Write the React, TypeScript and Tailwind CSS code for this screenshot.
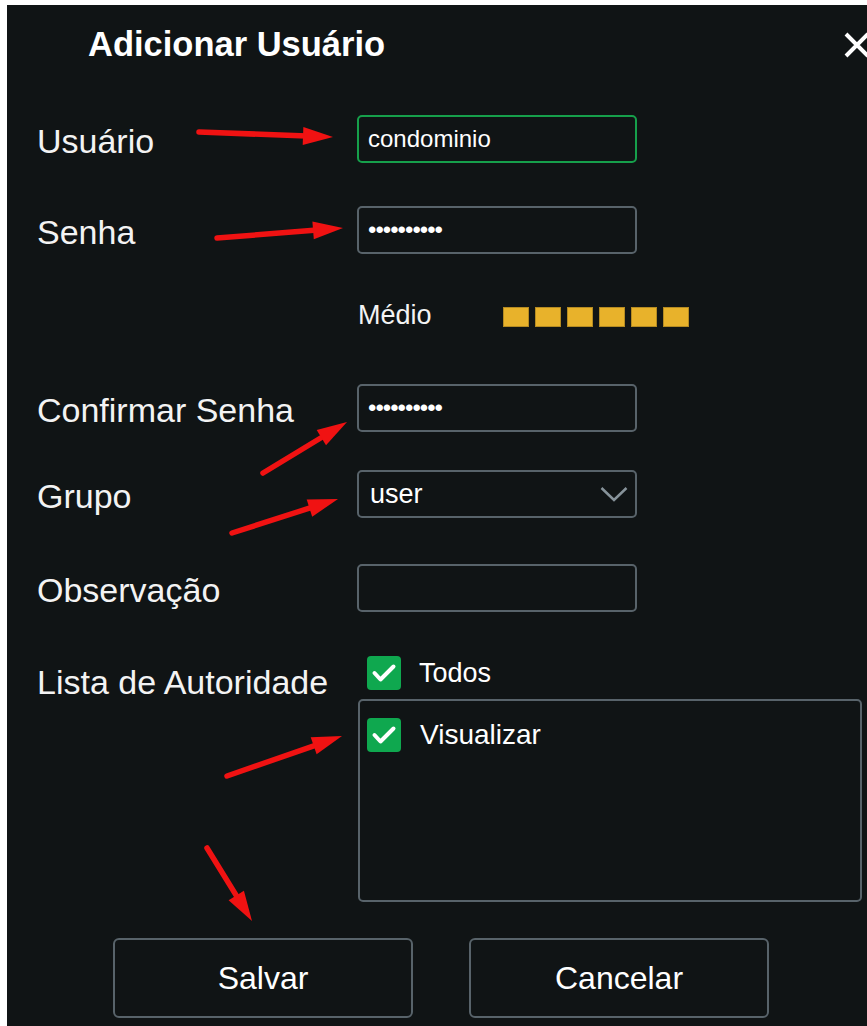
const arrows: { from: [number, number]; to: [number, number] }[] = [
  { from: [199, 132], to: [333, 137] },
  { from: [217, 238], to: [343, 228] },
  { from: [263, 473], to: [347, 422] },
  { from: [232, 533], to: [338, 499] },
  { from: [227, 776], to: [342, 736] },
  { from: [207, 848], to: [252, 921] },
];

// red callout arrows drawn over the form
const Arrow = ({ from, to }: { from: [number, number]; to: [number, number] }) => {
  const [x1, y1] = from;
  const [x2, y2] = to;
  const len = Math.hypot(x2 - x1, y2 - y1);
  const ux = (x2 - x1) / len;
  const uy = (y2 - y1) / len;
  const head = 30;
  const half = 9;
  const bx = x2 - ux * head;
  const by = y2 - uy * head;
  const nx = -uy * half;
  const ny = ux * half;
  return (
    <g>
      <line
        x1={x1}
        y1={y1}
        x2={bx + ux * 4}
        y2={by + uy * 4}
        stroke="#f01212"
        strokeWidth={5.5}
        strokeLinecap="round"
      />
      <polygon
        points={`${x2},${y2} ${bx + nx},${by + ny} ${bx - nx},${by - ny}`}
        fill="#f01212"
      />
    </g>
  );
};

const CheckBox = () => (
  <span className="flex h-[34px] w-[34px] shrink-0 items-center justify-center rounded-[4px] bg-[#0fa84f]">
    <svg width="34" height="34" viewBox="0 0 34 34">
      <polyline
        points="7.5,17 13.5,23.5 26.5,10.5"
        fill="none"
        stroke="white"
        strokeWidth={4}
        strokeLinecap="round"
        strokeLinejoin="round"
      />
    </svg>
  </span>
);

const Row = ({ label, children }: { label?: string; children: React.ReactNode }) => (
  <div className="flex h-[48px] items-center">
    <span className="w-[320px] shrink-0 translate-y-[2px] text-[34px] leading-[38px] text-[#f3f3f3]">
      {label}
    </span>
    {children}
  </div>
);

const inputCls =
  "h-[48px] w-[280px] rounded-[5px] border-2 bg-transparent px-[9px] text-[24px] leading-[30px] text-white outline-none";

const App: React.FC = () => {
  return (
    <div className="relative h-[1026px] w-[867px] overflow-hidden bg-white font-['Liberation_Sans',Arial,sans-serif]">
      <div className="ml-[7px] mt-[5px] h-[1021px] w-[860px] overflow-hidden bg-[#101415] pl-[30px]">
        <header className="flex h-[80px] items-center">
          <h1 className="pl-[51px] text-[34.5px] font-bold text-white">Adicionar Usuário</h1>
          <svg className="-mr-[4px] ml-auto" width="28" height="28" viewBox="0 0 28 28">
            <path d="M3 3 L25 25 M25 3 L3 25" stroke="white" strokeWidth={4} />
          </svg>
        </header>

        <div className="mt-[30px]">
          <Row label="Usuário">
            <input readOnly defaultValue="condominio" className={`${inputCls} border-[#16a04b]`} />
          </Row>
        </div>

        <div className="mt-[43px]">
          <Row label="Senha">
            <input
              readOnly
              defaultValue="••••••••••"
              className={`${inputCls} border-[#58636a] text-[19px] tracking-[-1px]`}
            />
          </Row>
        </div>

        <div className="mt-[44px] flex h-[34px] items-center pl-[320px]">
          <span className="w-[146px] pl-[1px] text-[27px] leading-[32px] text-[#f3f3f3]">Médio</span>
          <div className="flex translate-y-[2px] gap-[6px]">
            {[0, 1, 2, 3, 4, 5].map((i) => (
              <span key={i} className="h-[20px] w-[26px] border border-[#b58b22] bg-[#e8b22b]" />
            ))}
          </div>
        </div>

        <div className="mt-[52px]">
          <Row label="Confirmar Senha">
            <input
              readOnly
              defaultValue="••••••••••"
              className={`${inputCls} border-[#58636a] text-[19px] tracking-[-1px]`}
            />
          </Row>
        </div>

        <div className="mt-[38px]">
          <Row label="Grupo">
            <div className="flex h-[48px] w-[280px] items-center justify-between rounded-[5px] border-2 border-[#58636a] pl-[11px] pr-[7px]">
              <span className="text-[27px] leading-[32px] text-white">user</span>
              <svg width="28" height="16" viewBox="0 0 28 16">
                <polyline points="1.5,2 14,14 26.5,2" fill="none" stroke="#87939a" strokeWidth={2.5} />
              </svg>
            </div>
          </Row>
        </div>

        <div className="mt-[46px]">
          <Row label="Observação">
            <input readOnly defaultValue="" className={`${inputCls} border-[#58636a]`} />
          </Row>
        </div>

        <div className="mt-[44px] flex">
          <span className="w-[320px] shrink-0 pt-[7px] text-[34px] leading-[38px] text-[#f3f3f3]">
            Lista de Autoridade
          </span>
          <div>
            <label className="flex h-[34px] items-center gap-[18px] pl-[10px]">
              <CheckBox />
              <span className="text-[27px] leading-[32px] text-white">Todos</span>
            </label>
            <div className="ml-[1px] mt-[9px] h-[203px] w-[504px] rounded-[5px] border-2 border-[#58636a] pl-[7px] pt-[17px]">
              <label className="flex h-[34px] items-center gap-[19px]">
                <CheckBox />
                <span className="text-[28px] leading-[32px] text-white">Visualizar</span>
              </label>
            </div>
          </div>
        </div>

        <div className="mt-[36px] flex gap-[56px] pl-[76px]">
          <button className="h-[80px] w-[300px] rounded-[6px] border-2 border-[#58636a] text-[32px] text-white">
            Salvar
          </button>
          <button className="h-[80px] w-[300px] rounded-[6px] border-2 border-[#58636a] text-[32px] text-white">
            Cancelar
          </button>
        </div>
      </div>

      <svg className="pointer-events-none absolute inset-0" width="867" height="1026">
        {arrows.map((a, i) => (
          <Arrow key={i} from={a.from} to={a.to} />
        ))}
      </svg>
    </div>
  );
};

export default App;
